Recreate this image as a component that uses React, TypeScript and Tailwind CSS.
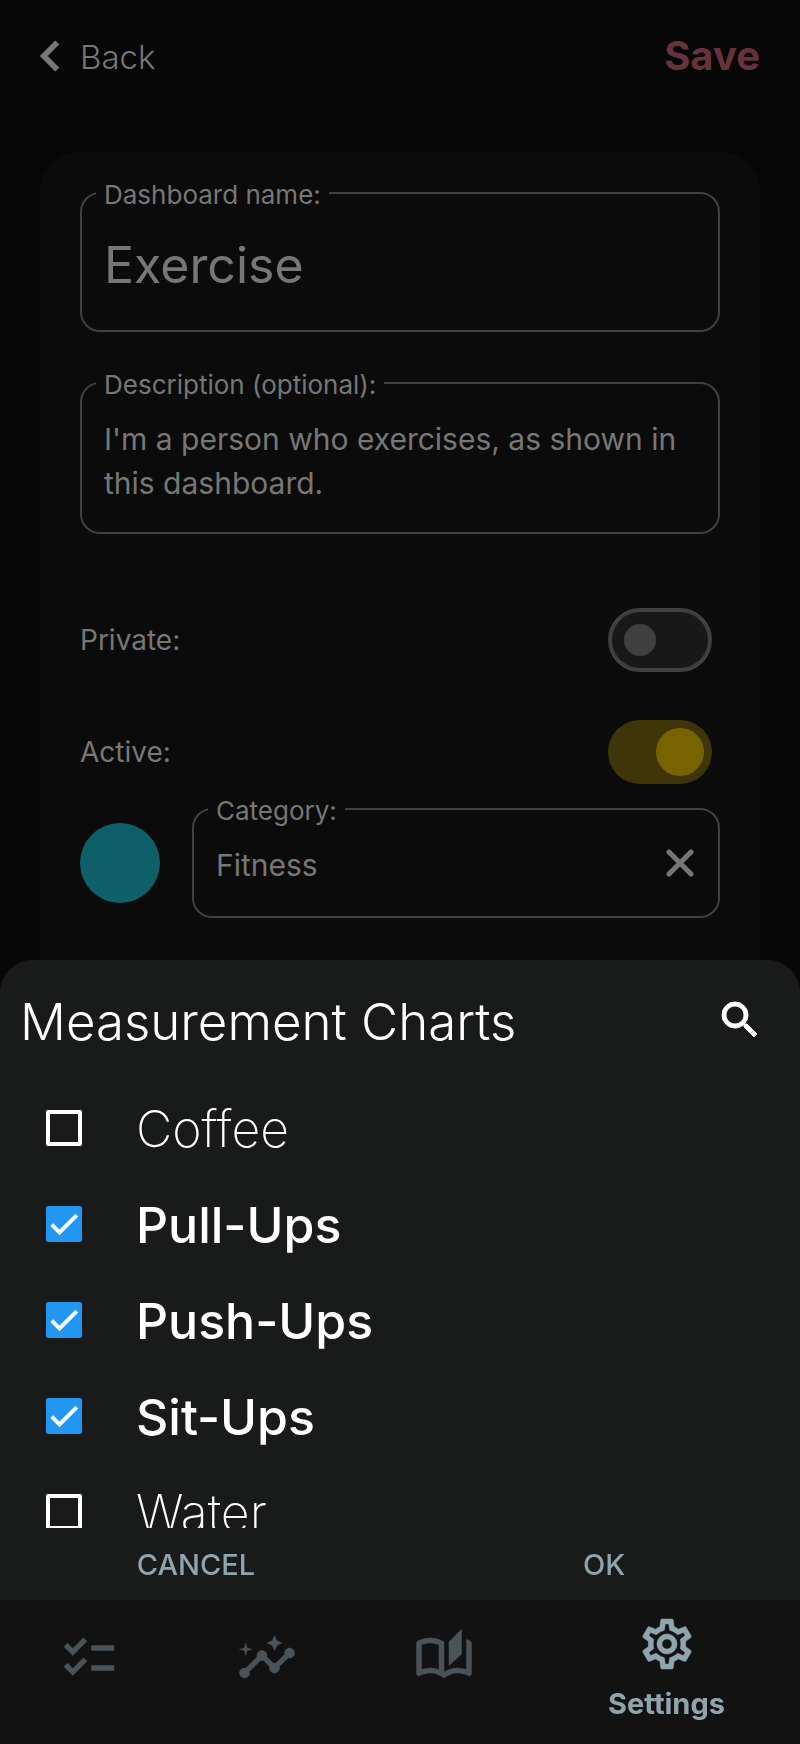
import { useState } from "react";
import type { ReactNode } from "react";
import {
  MdCheck,
  MdChecklist,
  MdInsights,
  MdOutlineAutoStories,
  MdOutlineSettings,
  MdSearch,
} from "react-icons/md";

function Field({ label, htmlFor, className, children }: { label: string; htmlFor: string; className: string; children: ReactNode }) {
  return (
    <fieldset className={`min-w-0 rounded-[20px] border-2 border-[#404040] px-[14px] ${className}`}>
      <legend className="h-6 pr-2 pl-2 text-[26px] leading-7">
        <label htmlFor={htmlFor}>{label}</label>
      </legend>
      {children}
    </fieldset>
  );
}

function Toggle({ label, initial, className }: { label: string; initial: boolean; className: string }) {
  const [on, setOn] = useState(initial);
  return (
    <label className={`flex items-center justify-between pr-2 text-[28px] ${className}`}>
      {label}
      <input type="checkbox" role="switch" className="sr-only" checked={on} onChange={() => setOn(!on)} />
      <span
        className={
          on
            ? "flex h-16 w-[104px] items-center justify-end rounded-full bg-[#3f3508] px-2"
            : "flex h-16 w-[104px] items-center rounded-full border-4 border-[#404040] bg-[#181818] px-3"
        }
      >
        <span className={on ? "size-12 rounded-full bg-[#776300]" : "size-8 rounded-full bg-[#404040]"} />
      </span>
    </label>
  );
}

function Option({ label, initial }: { label: string; initial: boolean }) {
  const [checked, setChecked] = useState(initial);
  return (
    <label className="flex h-24 shrink-0 items-center gap-[54px] pl-[46px] text-white">
      <input type="checkbox" className="sr-only" checked={checked} onChange={() => setChecked(!checked)} />
      <span
        className={
          checked
            ? "flex size-9 items-center justify-center rounded-xs bg-[#2196f3]"
            : "size-9 rounded-xs border-4 border-white"
        }
      >
        {checked && <MdCheck className="size-9 [&>[fill=none]]:stroke-none" strokeWidth="0.7" />}
      </span>
      <span className={checked ? "pt-0.5 text-[50px] font-medium" : "pt-0.5 text-[50px] font-extralight"}>{label}</span>
    </label>
  );
}

export default function App() {
  return (
    <div className="flex min-h-screen flex-col bg-[#070707] font-['Inter',sans-serif] text-[#777777]">
      <header className="flex h-[152px] shrink-0 items-start justify-between px-10 pt-8">
        <button className="flex h-12 items-center gap-5 text-[33px] font-light">
          <svg viewBox="0 0 20 32" className="h-8 w-5" fill="none" stroke="currentColor" strokeWidth="5.6">
            <path d="M17.200 2.500 3.800 16l13.400 13.500" />
          </svg>
          <span className="pt-1">Back</span>
        </button>
        <button className="h-12 text-[40px] leading-[48px] font-bold text-[#673239]">Save</button>
      </header>

      <main className="mx-10 flex-1 rounded-t-[40px] bg-[#0b0b0b] px-10 pt-[29px]">
        <Field label="Dashboard name:" htmlFor="name" className="h-[151px]">
          <input id="name" defaultValue="Exercise" className="mt-5 h-20 w-full bg-transparent px-2 text-[50px] outline-none" />
        </Field>
        <Field label="Description (optional):" htmlFor="description" className="mt-[39px] h-[163px]">
          <textarea
            id="description"
            defaultValue="I'm a person who exercises, as shown in this dashboard."
            className="mt-[22px] block h-24 w-full resize-none overflow-hidden bg-transparent px-2 text-[30px] leading-[44px] outline-none"
          />
        </Field>
        <Toggle label="Private:" initial={false} className="mt-[74px]" />
        <Toggle label="Active:" initial={true} className="mt-12" />
        <div className="mt-[13px] flex items-end gap-8">
          <button aria-label="Category colour" className="mb-[15px] size-20 shrink-0 rounded-full bg-[#0f5f69]" />
          <Field label="Category:" htmlFor="category" className="h-[121px] flex-1">
            <div className="mt-4 flex h-14 items-center justify-between pr-[10px] pl-2">
              <input id="category" defaultValue="Fitness" className="min-w-0 flex-1 bg-transparent text-[30px] outline-none" />
              <button aria-label="Clear category" className="pb-1">
                <svg viewBox="0 0 28 28" className="size-7" fill="none" stroke="currentColor" strokeWidth="5" strokeLinecap="round">
                  <path d="M3 3 25 25M25 3 3 25" />
                </svg>
              </button>
            </div>
          </Field>
        </div>
      </main>

      <div className="fixed inset-x-0 bottom-0">
        <section aria-label="Measurement Charts" className="rounded-t-[32px] bg-[#191b1a]">
          <div className="flex h-[120px] items-center justify-between pr-9 pl-5 text-white">
            <h2 className="pt-1 text-[51px] font-light">Measurement Charts</h2>
            <button aria-label="Search">
              <MdSearch className="size-12 [&>[fill=none]]:stroke-none" strokeWidth="0.5" />
            </button>
          </div>
          <div className="flex h-[448px] flex-col overflow-hidden">
            <Option label="Coffee" initial={false} />
            <Option label="Pull-Ups" initial={true} />
            <Option label="Push-Ups" initial={true} />
            <Option label="Sit-Ups" initial={true} />
            <Option label="Water" initial={false} />
          </div>
          <div className="grid h-[72px] grid-cols-2 pt-0.5 text-[29px] font-medium text-[#90a4ae]">
            <button className="pr-2">CANCEL</button>
            <button className="pl-2">OK</button>
          </div>
        </section>
        <nav className="grid h-36 grid-cols-[178fr_177fr_178fr_267fr] bg-[#121212] text-[#4a5358]">
          <a href="#checklist" aria-label="Checklist" className="flex justify-center pt-7">
            <MdChecklist className="size-[60px] [&>[fill=none]]:stroke-none" strokeWidth="0.2" />
          </a>
          <a href="#insights" aria-label="Insights" className="flex justify-center pt-7">
            <MdInsights className="size-[60px] [&>[fill=none]]:stroke-none" strokeWidth="0.2" />
          </a>
          <a href="#journal" aria-label="Journal" className="flex justify-center pt-7">
            <MdOutlineAutoStories className="size-[60px] [&>[fill=none]]:stroke-none" strokeWidth="0.2" />
          </a>
          <a href="#settings" className="flex flex-col items-center gap-2 pt-[14px] text-[29px] font-bold text-[#90a4ae]">
            <MdOutlineSettings className="size-[60px] [&>[fill=none]]:stroke-none" strokeWidth="0.2" />
            Settings
          </a>
        </nav>
      </div>
    </div>
  );
}
